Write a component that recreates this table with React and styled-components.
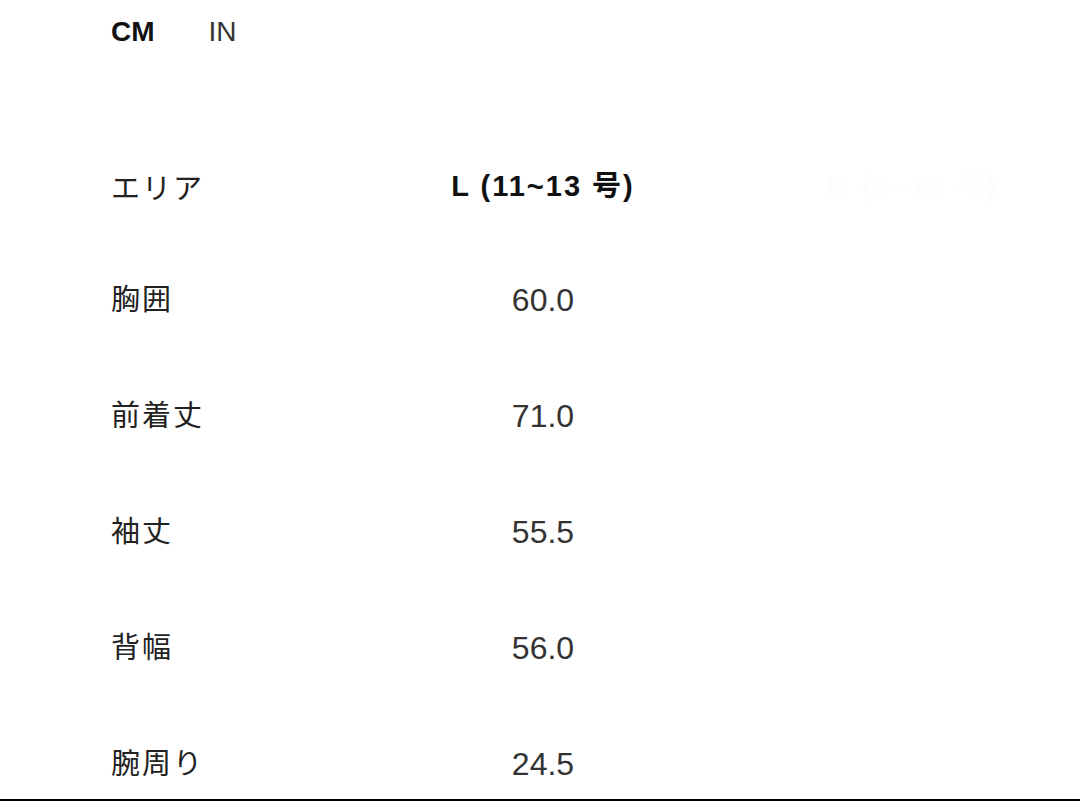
import React from 'react';
import styled, {createGlobalStyle} from "styled-components";

const GlobalStyle = createGlobalStyle`
  html, body {
    margin: 0;
    padding: 0;
    background: #ffffff;
  }
  body {
    font-family: "Liberation Sans", Arial, "Noto Sans CJK JP", sans-serif;
  }
`;

const rows = [
  {label: "胸囲", value: "60.0"},
  {label: "前着丈", value: "71.0"},
  {label: "袖丈", value: "55.5"},
  {label: "背幅", value: "56.0"},
  {label: "腕周り", value: "24.5"},
];

function App() {
  return <>
    <GlobalStyle />
    <Page>
      <Units>
        <Unit active>CM</Unit>
        <Unit>IN</Unit>
      </Units>

      <Table>
        <Row header>
          <Label>エリア</Label>
          <Value header>L (11~13 号)</Value>
          <Value header faint>M (9~11 号)</Value>
        </Row>
        {
          rows.map((row, index) => (
            <Row key={index}>
              <Label>{row.label}</Label>
              <Value>{row.value}</Value>
              <Value />
            </Row>
          ))
        }
      </Table>
    </Page>
  </>
}

const Page = styled.div`
    width: 1080px;
    height: 801px;
    box-sizing: border-box;
    padding-left: 111px;
    border-bottom: 2px solid #000;
    overflow: hidden;
    display: flex;
    flex-direction: column;
`;

const Units = styled.div`
    display: flex;
    align-items: center;
    gap: 54px;
    height: 28px;
    margin-top: 18px;
`;

const Unit = styled.span`
    font-family: "Liberation Sans", Arial, sans-serif;
    font-size: 28px;
    line-height: 28px;
    font-weight: ${p => p.active ? 700 : 400};
    color: ${p => p.active ? "#111" : "#333"};
`;

const Table = styled.div`
    display: flex;
    flex-direction: column;
    margin-top: 110px;
`;

const Row = styled.div`
    display: grid;
    grid-template-columns: 240px 384px 354px;
    align-items: center;
    height: ${p => p.header ? "60px" : "116px"};
    margin-bottom: ${p => p.header ? "23px" : "0"};
`;

const Label = styled.div`
    font-family: "Noto Sans CJK JP", sans-serif;
    font-size: 29px;
    line-height: 40px;
    color: #222;
    letter-spacing: 2px;
`;

const Value = styled.div`
    text-align: center;
    font-family: "Liberation Sans", Arial, "Noto Sans CJK JP", sans-serif;
    font-size: ${p => p.header ? "29px" : "32px"};
    font-weight: ${p => p.header ? 700 : 400};
    letter-spacing: ${p => p.header ? "2px" : "0"};
    line-height: 40px;
    padding-top: ${p => p.header ? "0" : "6px"};
    color: ${p => p.faint ? "#fdfdfd" : p.header ? "#111" : "#333"};
`;

export default App
